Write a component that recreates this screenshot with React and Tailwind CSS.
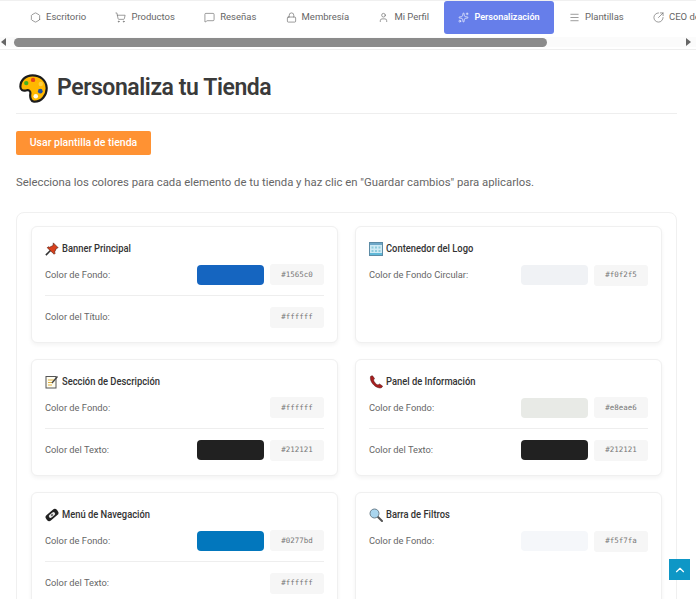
import React from 'react';
import { Hexagon, ShoppingCart, MessageSquare, Lock, User, Sparkles, Menu, ChevronUp, CircleArrowOutUpRight } from 'lucide-react';

const tabs = [
  { label: 'Escritorio', icon: Hexagon },
  { label: 'Productos', icon: ShoppingCart },
  { label: 'Reseñas', icon: MessageSquare },
  { label: 'Membresía', icon: Lock },
  { label: 'Mi Perfil', icon: User },
  { label: 'Personalización', icon: Sparkles, active: true },
  { label: 'Plantillas', icon: Menu },
  { label: 'CEO de Tienda', icon: CircleArrowOutUpRight },
];

const PaletteIcon = () => (
  <svg viewBox="0 0 32 32" className="h-[29px] w-[29px]">
    <path d="M15 1.500C7 1.500 1.500 7 1.500 14c0 3.500 3 5 6 4.200 3.500-1 5.500.5 5 3.800-.6 4 .5 8 4 8.500C25 31 31 23 30.500 15 30 7 23.500 1.500 15 1.500z" fill="#ffb800" stroke="#1c1c1c" strokeWidth="2.400" />
    <circle cx="8" cy="10" r="2.400" fill="#45b020" />
    <circle cx="15.500" cy="6.500" r="2.400" fill="#e8431a" />
    <circle cx="24" cy="11" r="2.400" fill="#ffcf40" />
    <circle cx="23.500" cy="19" r="2.600" fill="#1e4fa8" />
    <circle cx="18.500" cy="24.500" r="2.500" fill="#fffbe8" />
  </svg>
);

const PinIcon = () => (
  <svg viewBox="0 0 16 16" className="h-[14px] w-[14px]">
    <path d="M1 15l5.500-5.500" stroke="#333" strokeWidth="1.800" />
    <path d="M9.500 1L15 6.500l-2 .8-2 4 .5 1.700-1 1L2.500 6.500l1-1 1.700.5 4-2z" fill="#d9401c" stroke="#4a1a10" strokeWidth="0.700" />
  </svg>
);

const LogoIcon = () => (
  <svg viewBox="0 0 14 14" className="h-[14px] w-[14px]">
    <rect x="0.500" y="0.500" width="13" height="13" fill="#cfeaf4" stroke="#5c8ba5" />
    <rect x="1" y="1" width="12" height="2" fill="#6fa8c8" />
    <path d="M2.500 4.500h2v2h-2zM6 4.500h2v2H6zM9.500 4.500h2v2h-2zM2.500 8h2v2h-2zM6 8h2v2H6zM9.500 8h2v2h-2z" fill="#8fcbdc" />
    <rect x="1" y="11" width="12" height="2" fill="#5fb8d8" />
  </svg>
);

const MemoIcon = () => (
  <svg viewBox="0 0 14 14" className="h-[14px] w-[14px]">
    <rect x="1" y="1.500" width="10" height="11.500" fill="#fffdf0" stroke="#555" />
    <path d="M3 5h6M3 7.500h5M3 10h4" stroke="#e0b040" />
    <path d="M7 8l5.500-6.500" stroke="#444" strokeWidth="1.300" />
  </svg>
);

const PhoneIcon = () => (
  <svg viewBox="0 0 14 14" className="h-[14px] w-[14px]">
    <path d="M1.500 1.500C.5 6 5 12.500 11 13c1.500 0 2.500-1 2.500-2L10.500 9 9 10C7 9.500 5 7 4.500 5L5.500 3.500 3.500.8C2.800.8 2 1 1.500 1.500z" fill="#a81e1e" stroke="#4a1010" strokeWidth="0.500" />
  </svg>
);

const NavIcon = () => (
  <svg viewBox="0 0 14 14" className="h-[14px] w-[14px]">
    <g transform="rotate(-40 7 7)">
      <rect x="0" y="3.500" width="14" height="7" rx="3" fill="#222" />
      <rect x="3.500" y="5.300" width="7" height="3.400" rx="1.500" fill="#e8e8e8" />
      <rect x="6" y="6.200" width="2" height="1.600" fill="#555" />
    </g>
  </svg>
);

const SearchIcon = () => (
  <svg viewBox="0 0 14 14" className="h-[14px] w-[14px]">
    <path d="M8 8l5 5" stroke="#555" strokeWidth="2" strokeLinecap="round" />
    <circle cx="5.500" cy="5.500" r="4.500" fill="#a9d5ee" stroke="#6b7f8c" />
  </svg>
);

const ColorRow = ({ label, color, border }) => (
  <div className={`flex h-[42px] items-center ${border ? 'border-b border-[#eeeeee]' : ''}`}>
    <span className="flex-1 text-[9.300px] text-[#666666]">{label}</span>
    {color !== '#ffffff' && <div className="h-[20px] w-[67px] rounded-[4px]" style={{ background: color }} />}
    <code className="ml-[6px] flex h-[21px] w-[54px] items-center justify-center rounded-[3px] bg-[#f6f6f6] text-[7.500px] text-[#777777] [font-family:'DejaVu_Sans_Mono',monospace]">
      {color}
    </code>
  </div>
);

const ColorCard = ({ icon: Icon, title, rows }) => (
  <div className="h-[117px] rounded-[6px] border border-[#f0f0f0] bg-white px-[13px] pt-[14px] shadow-[0_2px_4px_rgba(0,0,0,0.05)]">
    <h3 className="-mb-[3px] flex h-[16px] items-center gap-[3px] whitespace-nowrap text-[11.500px] font-medium text-[#333333]">
      <Icon />
      <span className="inline-block origin-left scale-x-[0.815]">{title}</span>
    </h3>
    {rows.map((row, i) => (
      <ColorRow key={row.label} {...row} border={i < rows.length - 1} />
    ))}
  </div>
);

const cards = [
  { icon: PinIcon, title: 'Banner Principal', rows: [{ label: 'Color de Fondo:', color: '#1565c0' }, { label: 'Color del Título:', color: '#ffffff' }] },
  { icon: LogoIcon, title: 'Contenedor del Logo', rows: [{ label: 'Color de Fondo Circular:', color: '#f0f2f5' }] },
  { icon: MemoIcon, title: 'Sección de Descripción', rows: [{ label: 'Color de Fondo:', color: '#ffffff' }, { label: 'Color del Texto:', color: '#212121' }] },
  { icon: PhoneIcon, title: 'Panel de Información', rows: [{ label: 'Color de Fondo:', color: '#e8eae6' }, { label: 'Color del Texto:', color: '#212121' }] },
  { icon: NavIcon, title: 'Menú de Navegación', rows: [{ label: 'Color de Fondo:', color: '#0277bd' }, { label: 'Color del Texto:', color: '#ffffff' }] },
  { icon: SearchIcon, title: 'Barra de Filtros', rows: [{ label: 'Color de Fondo:', color: '#f5f7fa' }] },
];

export default function App() {
  return (
    <div className="relative h-[599px] w-[696px] overflow-hidden bg-white [font-family:Roboto,sans-serif]">
      {/* tabs and their scrollbar */}
      <div className="h-[50px] border-b border-t border-b-[#eeeeee] border-t-[#f0f0f0]">
        <div className="flex h-[33px] gap-[1.250px] overflow-hidden pl-[16px]">
          {tabs.map(({ label, icon: Icon, active }) => (
            <div
              key={label}
              className={`flex shrink-0 items-center gap-[5px] whitespace-nowrap px-[14px] ${
                active ? 'rounded-[3px] bg-[#667eea] text-[9.100px] font-semibold text-white' : 'text-[9.500px] text-[#666666]'
              }`}
            >
              <Icon className="h-[11px] w-[11px]" strokeWidth={1.400} />
              {label}
            </div>
          ))}
        </div>
        <div className="mt-[3px] flex h-[10px] items-center bg-[#fbfbfb]">
          <span className="ml-[1px] h-0 w-0 border-y-[4px] border-r-[5px] border-y-transparent border-r-[#666666]" />
          <div className="ml-[8px] h-[9px] w-[533px] rounded-full bg-[#8b8b8b]" />
          <span className="ml-[139px] h-0 w-0 border-y-[4px] border-l-[5px] border-y-transparent border-l-[#666666]" />
        </div>
      </div>

      <div className="px-4">
        <div className="mr-[3px] flex h-[64px] items-center gap-[9px] border-b border-[#eeeeee] pl-[3px] pt-[14px]">
          <PaletteIcon />
          <h1 className="text-[23px] font-semibold tracking-[-0.43px] text-[#3a3a3a]">Personaliza tu Tienda</h1>
        </div>
        <button className="mt-[17px] block h-[24px] w-[135px] rounded-[2px] bg-[#ff9233] text-[10.500px] font-medium text-white">
          Usar plantilla de tienda
        </button>
        <p className="mt-[18px] text-[11.330px] leading-[18px] text-[#666666]">
          Selecciona los colores para cada elemento de tu tienda y haz clic en "Guardar cambios" para aplicarlos.
        </p>
        <div className="mr-[3px] mt-[21px] grid grid-cols-2 gap-x-[17px] gap-y-[16px] rounded-[8px] border border-[#f0f0f0] px-[14px] py-[13px]">
          {cards.map((card) => (
            <ColorCard key={card.title} {...card} />
          ))}
        </div>
      </div>

      {/* back to top */}
      <button className="absolute left-[669px] top-[559px] flex h-[21px] w-[21px] items-center justify-center bg-[#0e97c6] text-white">
        <ChevronUp className="h-[14px] w-[14px]" />
      </button>
    </div>
  );
}
